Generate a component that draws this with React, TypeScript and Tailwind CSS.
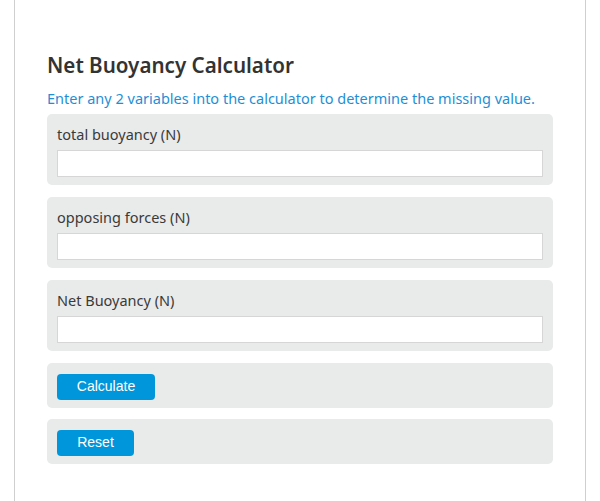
export default function App() {
  const fields = ['total buoyancy (N)', 'opposing forces (N)', 'Net Buoyancy (N)'];

  return (
    <div className="h-[501px] w-[600px] overflow-hidden bg-white" style={{ fontFamily: '"Noto Sans", "Open Sans", sans-serif' }}>
      <div className="ml-[14px] h-full w-[572px] border-x border-[#cfcfcf] px-[32px] pt-[50px]">
        <h1 className="text-[20.6px] font-semibold leading-[30px] text-[#333]">Net Buoyancy Calculator</h1>
        <p className="mt-[8px] text-[14.5px] leading-[20px] text-[#1e8fd6]">
          Enter any 2 variables into the calculator to determine the missing value.
        </p>

        <div className="mt-[6px] flex flex-col">
          {fields.map((label) => (
            <div key={label} className="mb-[12px] h-[71px] rounded-[5px] bg-[#e9eaea] px-[10px] pt-[10px]">
              <label className="block text-[14.5px] leading-[20px] text-[#3a3a3a]">{label}</label>
              <input type="text" className="mt-[6px] block h-[27px] w-full border border-[#d6d6d6] bg-white outline-none" />
            </div>
          ))}

          <div className="mb-[11px] h-[45px] rounded-[5px] bg-[#e9eaea] px-[10px] pt-[10px]">
            <button
              className="h-[26px] w-[98px] rounded-[4px] bg-[#0096db] text-[14px] text-white"
              style={{ fontFamily: '"Liberation Sans", Arial, sans-serif' }}
            >
              Calculate
            </button>
          </div>

          <div className="h-[45px] rounded-[5px] bg-[#e9eaea] px-[10px] pt-[10px]">
            <button
              className="h-[26px] w-[77px] rounded-[4px] bg-[#0096db] text-[14px] text-white"
              style={{ fontFamily: '"Liberation Sans", Arial, sans-serif' }}
            >
              Reset
            </button>
          </div>
        </div>
      </div>
    </div>
  );
}
